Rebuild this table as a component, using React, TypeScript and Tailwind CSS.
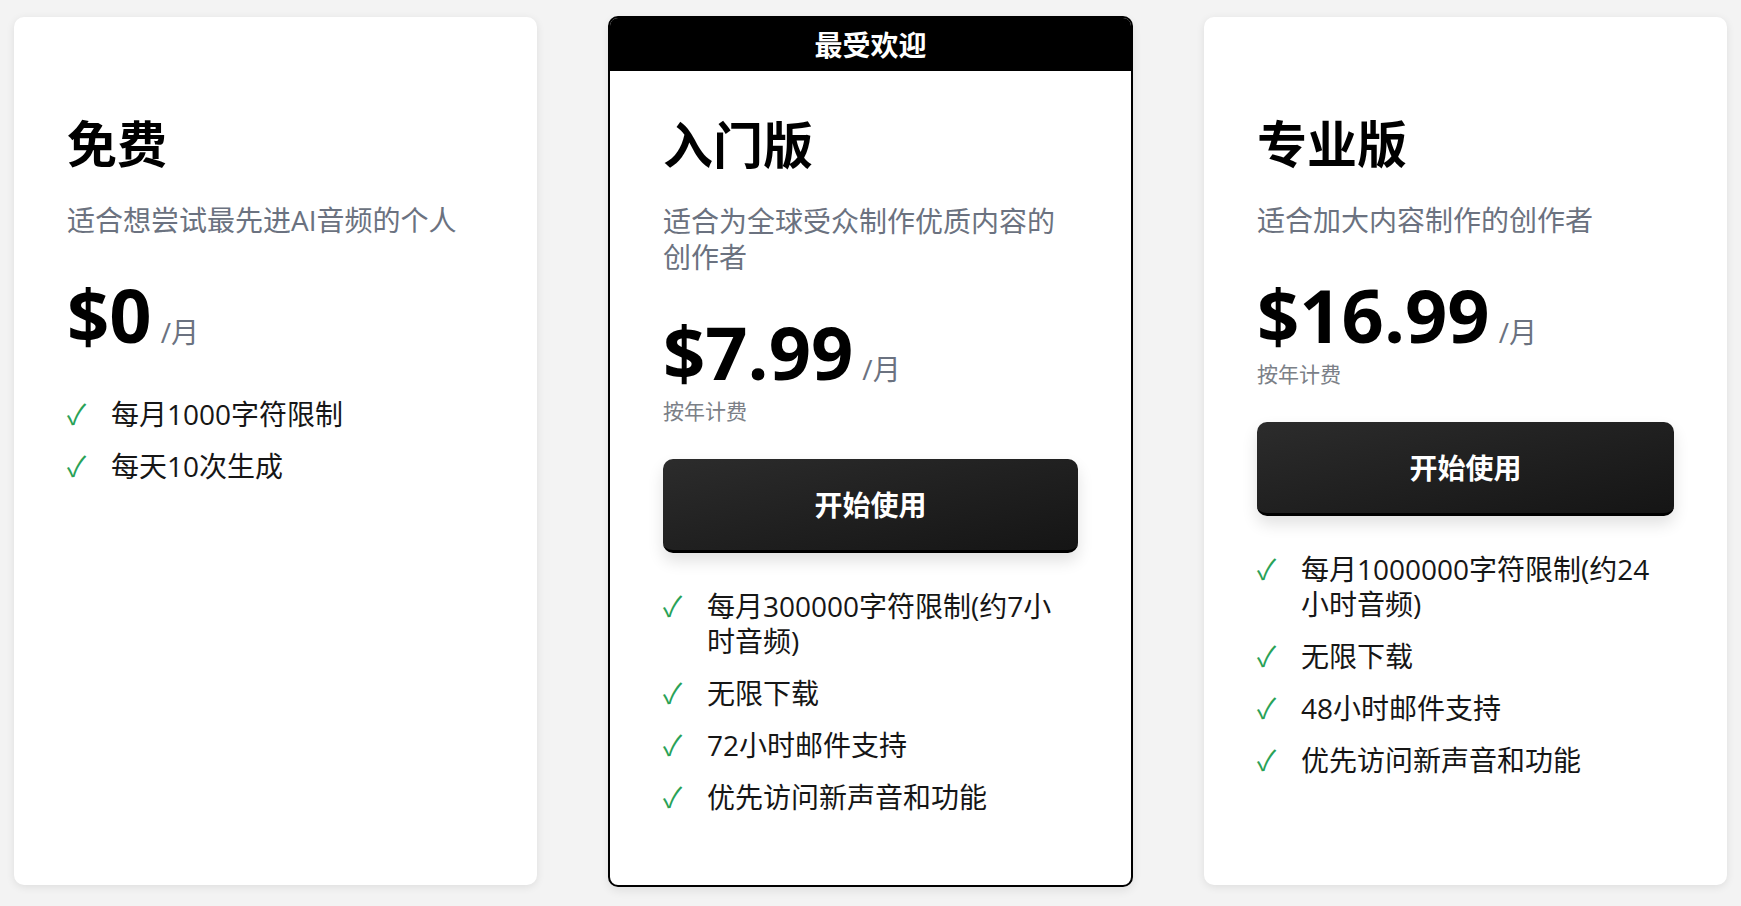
import React from "react";

type Plan = {
  name: string;
  desc: string;
  price: string;
  yearly: boolean;
  button: boolean;
  features: string[];
  popular?: boolean;
};

const plans: Plan[] = [
  {
    name: "免费",
    desc: "适合想尝试最先进AI音频的个人",
    price: "$0",
    yearly: false,
    button: false,
    features: ["每月1000字符限制", "每天10次生成"],
  },
  {
    name: "入门版",
    desc: "适合为全球受众制作优质内容的创作者",
    price: "$7.99",
    yearly: true,
    button: true,
    popular: true,
    features: [
      "每月300000字符限制(约7小时音频)",
      "无限下载",
      "72小时邮件支持",
      "优先访问新声音和功能",
    ],
  },
  {
    name: "专业版",
    desc: "适合加大内容制作的创作者",
    price: "$16.99",
    yearly: true,
    button: true,
    features: [
      "每月1000000字符限制(约24小时音频)",
      "无限下载",
      "48小时邮件支持",
      "优先访问新声音和功能",
    ],
  },
];

function PlanBody({ plan }: { plan: Plan }) {
  return (
    <div className="px-[53px]">
      <h2 className="text-[50px] font-bold leading-[60px] text-black">{plan.name}</h2>
      <p className="mt-[28px] text-[28px] leading-[36px] text-[#6b7280]">{plan.desc}</p>
      <div className="mt-[40px] flex items-baseline">
        <span className="text-[74px] font-bold leading-none text-black">{plan.price}</span>
        <span className="ml-[9px] text-[28px] leading-none text-[#6b7280]">/月</span>
      </div>
      {plan.yearly && (
        <div className="mt-[10px] text-[21px] leading-[24px] text-[#7b8087]">按年计费</div>
      )}
      {plan.button && (
        <button className="mt-[36px] flex h-[94px] w-full items-center justify-center rounded-[10px] border-b-[3px] border-black bg-gradient-to-br from-[#2c2c2c] to-[#151515] text-[28px] font-bold text-white shadow-[0_8px_16px_rgba(0,0,0,0.12)]">
          开始使用
        </button>
      )}
      <ul className={`${plan.button ? "mt-[36px]" : "mt-[45px]"} flex flex-col gap-[17px]`}>
        {plan.features.map((f) => (
          <li key={f} className="flex text-[28px] leading-[35px] text-[#161616]">
            <span className="w-[44px] shrink-0 text-[#2aa257]">✓</span>
            <span>{f}</span>
          </li>
        ))}
      </ul>
    </div>
  );
}

export default function App() {
  return (
    <div className="grid h-[906px] w-full grid-cols-3 items-start gap-[72px] bg-[#f3f3f3] px-[14px] pt-[17px] font-['Open_Sans','Noto_Sans_CJK_SC',sans-serif]">
      {plans.map((plan) =>
        plan.popular ? (
          <div
            key={plan.name}
            className="-mx-px -mt-px flex h-[871px] flex-col overflow-hidden rounded-[10px] border-2 border-black bg-white shadow-[0_4px_10px_rgba(0,0,0,0.08)]"
          >
            <div className="flex h-[53px] shrink-0 items-center justify-center bg-black text-[28px] font-bold text-white">
              最受欢迎
            </div>
            <div className="pt-[44px]">
              <PlanBody plan={plan} />
            </div>
          </div>
        ) : (
          <div
            key={plan.name}
            className="h-[868px] rounded-[10px] bg-white pt-[97px] shadow-[0_2px_8px_rgba(0,0,0,0.09)]"
          >
            <PlanBody plan={plan} />
          </div>
        )
      )}
    </div>
  );
}
